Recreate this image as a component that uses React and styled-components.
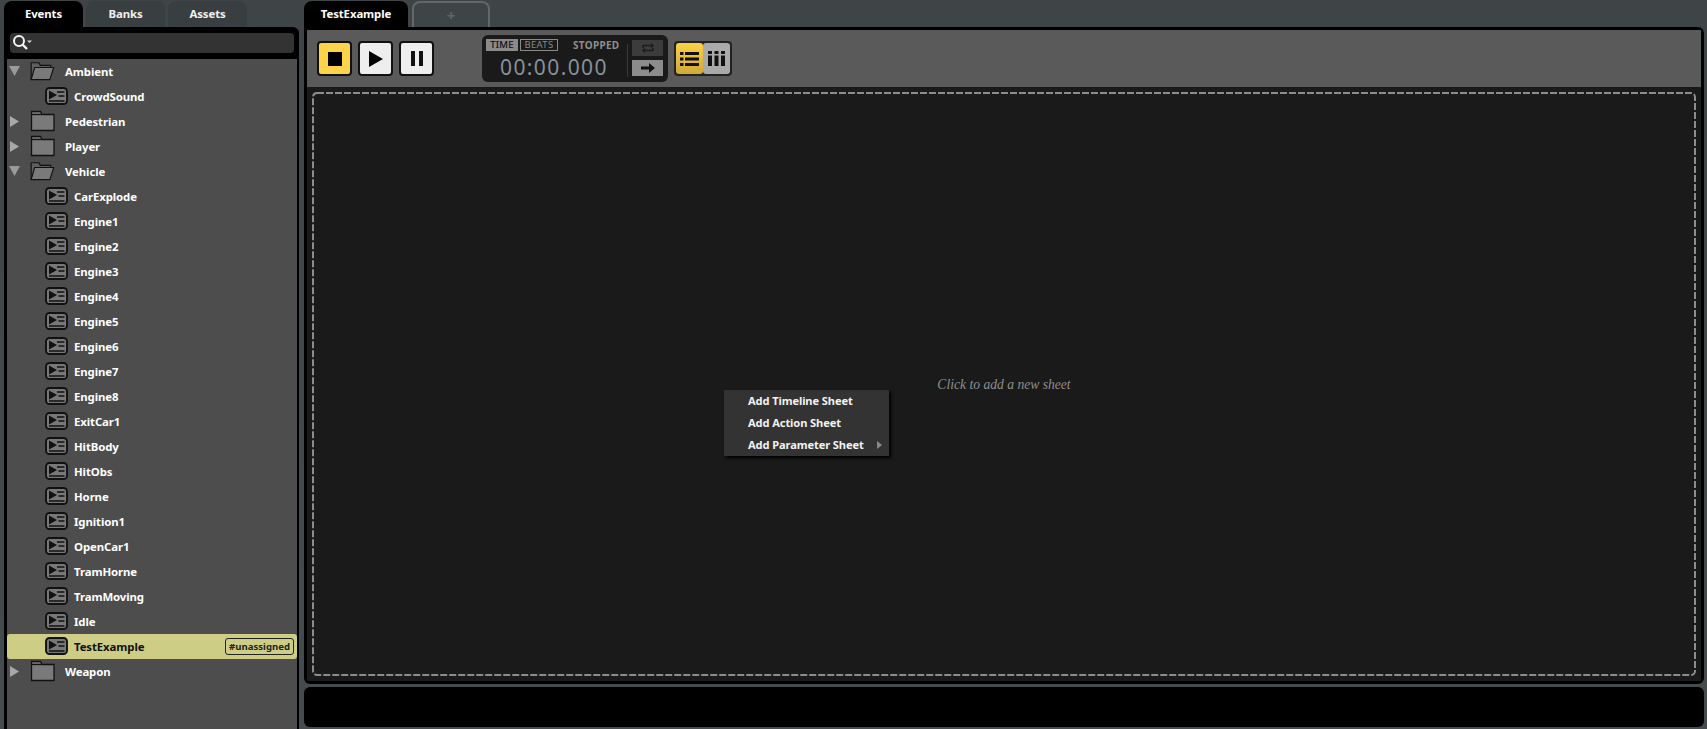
import React from "react";
import styled, { createGlobalStyle } from "styled-components";

const Global = createGlobalStyle`
  html, body { margin: 0; padding: 0; height: 100%; background: #42484a; overflow: hidden; }
  #root { height: 100%; }
  * { box-sizing: border-box; }
`;

const Page = styled.div`
  width: 1707px; height: 729px; display: flex; gap: 5px; padding: 1px 3px 0 4px;
  background: linear-gradient(#3f4547, #464c4e);
  font-family: "Noto Sans", "Open Sans", sans-serif; font-weight: 700; font-size: 11.4px; letter-spacing: -.1px; color: #fff;
`;
const LeftCol = styled.div`width: 295px; display: flex; flex-direction: column;`;
const RightCol = styled.div`flex: 1; display: flex; flex-direction: column; min-width: 0;`;
const TabRow = styled.div`height: 26px; display: flex; gap: ${p => p.$gap || 3}px; flex: none;`;
const Tab = styled.div`
  width: ${p => p.$w}px; height: 26px; display: flex; align-items: center; justify-content: center;
  border-radius: 8px 8px 0 0; padding-bottom: 2px;
  background: ${p => (p.$active ? "#000" : "#393f41")}; color: ${p => (p.$active ? "#fff" : "#f0f0f0")};
`;
const AddTab = styled.div`
  width: 78px; height: 26px; display: flex; align-items: center; justify-content: center;
  border: 2px solid #626768; border-bottom: 0; border-radius: 8px 8px 0 0; color: #5f6566; font-size: 15px;
`;
const Panel = styled.div`
  flex: 1; background: #000; border-radius: 0 6px 0 0; padding: 6px 2px 0 3px; display: flex; flex-direction: column;
`;
const SearchBar = styled.div`
  height: 20px; margin: 0 3px; background: #333; border-radius: 4px; display: flex; align-items: center; padding-left: 3px; flex: none;
`;
const Tree = styled.div`margin-top: 6px; flex: 1; background: #4d4d4d;`;
const Row = styled.div`
  height: 25px; display: flex; align-items: center; position: relative; padding-bottom: 1px;
  padding-left: ${p => (p.$folder ? 0 : 38)}px;
  background: ${p => (p.$selected ? "#cdcd85" : "transparent")};
  border-radius: ${p => (p.$selected ? "3px" : 0)};
  color: ${p => (p.$selected ? "#111" : "#fff")};
`;
const Arrow = styled.span`width: 14px; height: 25px; flex: none; display: flex; align-items: center; justify-content: center;`;
const FolderSlot = styled.span`
  width: 26px; height: 25px; display: flex; align-items: center; margin-left: 8px; margin-right: 10px;
`;
const EventSlot = styled.span`width: 23px; height: 18px; display: flex; margin-right: 6px;`;
const Tag = styled.span`
  position: absolute; right: 3px; top: 4px; height: 17px; padding: 0 3px; display: flex; align-items: center;
  border: 1px solid #222; border-radius: 3px; font-size: 9.6px; letter-spacing: 0; color: #222;
`;
const Main = styled.div`
  height: 657px; flex: none; background: #000; border-radius: 0 6px 6px 6px; padding: 3px; display: flex; flex-direction: column;
`;
const Toolbar = styled.div`
  height: 57px; flex: none; background: #5a5a5a; display: flex; align-items: flex-start; padding: 11px 0 0 10px;
`;
const CtlButton = styled.div`
  width: 35px; height: 35px; margin-right: 6px; border: 2px solid #111; border-radius: 4px; display: flex; align-items: center; justify-content: center;
  background: ${p => (p.$on ? "#fdd34a" : "#eee")};
`;
const Transport = styled.div`
  margin: -6px 0 0 42px; width: 186px; height: 47px; background: #1a1a1a; border-radius: 6px; display: flex; padding: 4px;
`;
const Readout = styled.div`width: 141px; display: flex; flex-direction: column;`;
const ModeRow = styled.div`display: flex; align-items: center; height: 12px;`;
const ModeOn = styled.span`
  width: 32px; height: 12px; background: #8a8a8a; color: #111; font-size: 9.5px; line-height: 12px; text-align: center; font-weight: 400; letter-spacing: .3px; -webkit-text-stroke: .2px #111;
`;
const ModeOff = styled.span`
  width: 38px; height: 12px; margin-left: 2px; border: 1px solid #8a8a8a; color: #8a8a8a; font-size: 9.5px; line-height: 10px; text-align: center; font-weight: 400; letter-spacing: .3px;
`;
const Stopped = styled.span`margin-left: 15px; color: #8f8f8f; font-size: 10px; letter-spacing: .3px;`;
const Clock = styled.div`
  margin: 4px 0 0 14px; font-weight: 400; font-size: 21px; line-height: 24px; letter-spacing: 1.4px; color: #87919a; white-space: nowrap;
`;
const Divider = styled.div`width: 1px; height: 33px; margin: 5px 4px 0 0; background: #3a3a3a;`;
const RepeatCol = styled.div`display: flex; flex-direction: column; gap: 4px; width: 31px; margin-top: 1px;`;
const RepeatBtn = styled.div`
  height: 16px; display: flex; align-items: center; justify-content: center; background: ${p => (p.$on ? "#8c8c8c" : "#3c3c3c")};
`;
const ViewGroup = styled.div`
  margin-left: 6px; width: 58px; height: 35px; padding: 2px; border-radius: 4px; background: #222; display: flex;
`;
const ViewBtn = styled.div`
  flex: 1; display: flex; align-items: center; justify-content: center; border-radius: 3px;
  background: ${p => (p.$on ? "linear-gradient(#fbd244, #d0a83a)" : "#aaa")};
`;
const Canvas = styled.div`flex: 1; background: #1a1a1a; padding: 5px; display: flex; position: relative;`;
const Dropzone = styled.div`
  flex: 1; position: relative; display: flex; align-items: center; justify-content: center;
`;
const DashFrame = styled.svg`position: absolute; inset: 0; width: 100%; height: 100%; pointer-events: none;`;
const DashRect = styled.rect`
  x: 1px; y: 1px; width: calc(100% - 2px); height: calc(100% - 2px); rx: 4px;
  fill: none; stroke: #8c8c8c; stroke-width: 2px; stroke-dasharray: 7 2;
`;
const Hint = styled.span`
  padding-top: 1px; font-family: "Liberation Serif", serif; font-style: italic; font-weight: 400; font-size: 13.6px; letter-spacing: 0; color: #8f8f8f;
`;
const Menu = styled.div`
  position: absolute; left: 417px; top: 303px; width: 165px; height: 66px; background: #333; box-shadow: 2px 2px 3px #000; display: flex; flex-direction: column;
  font-size: 11.1px;
`;
const MenuItem = styled.div`
  height: 22px; display: flex; align-items: center; padding: 0 7px 1px 24px; justify-content: space-between; color: #f2f2f2;
`;
const Bottom = styled.div`height: 40px; flex: none; margin-top: 3px; background: #000; border-radius: 6px;`;

const TriDown = () => <svg width="11" height="10" viewBox="0 0 11 10"><path d="M0 0h11L5.500 10z" fill="#9a9a9a" /></svg>;
const TriRight = () => <svg width="9" height="11" viewBox="0 0 9 11"><path d="M0 0v11l9-5.500z" fill="#a8a8a8" /></svg>;
const FolderClosed = () => (
  <svg width="26" height="22" viewBox="0 0 26 22">
    <path d="M2.500 4.500V1.500h9l1.500 3h12v16h-22.500z" fill="#7a7a7a" stroke="#111" strokeWidth="1.300" />
    <path d="M2.500 4.500h10" stroke="#111" strokeWidth="1.300" />
  </svg>
);
const FolderOpen = () => (
  <svg width="30" height="22" viewBox="0 0 30 22">
    <path d="M2.500 21V1.500h9l1.500 3h12v3" fill="#5e5e5e" stroke="#111" strokeWidth="1.300" />
    <path d="M2.500 21l4-14h22l-4.500 14z" fill="#7a7a7a" stroke="#111" strokeWidth="1.300" />
  </svg>
);
const EventIcon = () => (
  <svg width="23" height="18" viewBox="0 0 23 18">
    <rect x="1" y="1" width="21" height="16" rx="3.500" fill="#787878" stroke="#111" strokeWidth="1.900" />
    <path d="M4 3.500v9l8-4.500z" fill="#111" />
    <path d="M12 5h7.500M13.500 9h6M4 14h15.500" stroke="#111" strokeWidth="1.300" />
  </svg>
);
const SearchIcon = () => (
  <svg width="22" height="18" viewBox="0 0 22 18">
    <circle cx="6" cy="7" r="5" fill="none" stroke="#f4f4f4" strokeWidth="2" />
    <path d="M9.500 10.500l4.500 4.500" stroke="#f4f4f4" strokeWidth="2.400" />
    <path d="M14 6.500h5l-2.500 2.500z" fill="#d8d8d8" />
  </svg>
);
const StopIcon = () => <svg width="14" height="14"><rect width="14" height="14" fill="#000" /></svg>;
const PlayIcon = () => <svg width="14" height="16"><path d="M0 0l14 8-14 8z" fill="#000" /></svg>;
const PauseIcon = () => <svg width="12" height="15"><path d="M0 0h4v15H0zM8 0h4v15H8z" fill="#111" /></svg>;
const RepeatIcon = () => (
  <svg width="14" height="12" viewBox="0 0 14 12">
    <path d="M2 6V3.500h8.500M12 6v2.500H3.500" fill="none" stroke="#1c1c1c" strokeWidth="1.600" />
    <path d="M10 .8l3 2.700-3 2.700zM4 5.800L1 8.500l3 2.700z" fill="#1c1c1c" />
  </svg>
);
const ArrowIcon = () => <svg width="14" height="10" viewBox="0 0 14 10"><path d="M0 3.500h8V0l6 5-6 5V6.500H0z" fill="#111" /></svg>;
const ListIcon = () => (
  <svg width="19" height="14" viewBox="0 0 19 14">
    <path d="M0 0h3.500v3H0zM5 0h14v3H5zM0 5.500h3.500v3H0zM5 5.500h14v3H5zM0 11h3.500v3H0zM5 11h14v3H5z" fill="#111" />
  </svg>
);
const ColsIcon = () => (
  <svg width="17" height="15" viewBox="0 0 17 15">
    <path d="M0 0h4v3H0zM6.500 0h4v3h-4zM13 0h4v3h-4zM0 4.500h4V15H0zM6.500 4.500h4V15h-4zM13 4.500h4V15h-4z" fill="#111" />
  </svg>
);
const SubArrow = () => <svg width="5" height="8"><path d="M0 0l5 4-5 4z" fill="#8a8a8a" /></svg>;

const tree = [
  { f: "Ambient", open: true }, { e: "CrowdSound" }, { f: "Pedestrian" }, { f: "Player" }, { f: "Vehicle", open: true },
  ...["CarExplode", "Engine1", "Engine2", "Engine3", "Engine4", "Engine5", "Engine6", "Engine7", "Engine8", "ExitCar1", "HitBody", "HitObs", "Horne", "Ignition1", "OpenCar1", "TramHorne", "TramMoving", "Idle"].map(e => ({ e })),
  { e: "TestExample", selected: true }, { f: "Weapon" },
];

export default function App() {
  return (
    <Page>
      <Global />
      <LeftCol>
        <TabRow>
          <Tab $w={79} $active>Events</Tab>
          <Tab $w={79}>Banks</Tab>
          <Tab $w={79}>Assets</Tab>
        </TabRow>
        <Panel>
          <SearchBar><SearchIcon /></SearchBar>
          <Tree>
            {tree.map(item =>
              item.f ? (
                <Row $folder key={item.f}>
                  <Arrow>{item.open ? <TriDown /> : <TriRight />}</Arrow>
                  <FolderSlot>{item.open ? <FolderOpen /> : <FolderClosed />}</FolderSlot>
                  {item.f}
                </Row>
              ) : (
                <Row key={item.e} $selected={item.selected}>
                  <EventSlot><EventIcon /></EventSlot>
                  {item.e}
                  {item.selected && <Tag>#unassigned</Tag>}
                </Row>
              )
            )}
          </Tree>
        </Panel>
      </LeftCol>
      <RightCol>
        <TabRow $gap={4}>
          <Tab $w={104} $active>TestExample</Tab>
          <AddTab>+</AddTab>
        </TabRow>
        <Main>
          <Toolbar>
            <CtlButton $on><StopIcon /></CtlButton>
            <CtlButton><PlayIcon /></CtlButton>
            <CtlButton><PauseIcon /></CtlButton>
            <Transport>
              <Readout>
                <ModeRow>
                  <ModeOn>TIME</ModeOn>
                  <ModeOff>BEATS</ModeOff>
                  <Stopped>STOPPED</Stopped>
                </ModeRow>
                <Clock>00:00.000</Clock>
              </Readout>
              <Divider />
              <RepeatCol>
                <RepeatBtn><RepeatIcon /></RepeatBtn>
                <RepeatBtn $on><ArrowIcon /></RepeatBtn>
              </RepeatCol>
            </Transport>
            <ViewGroup>
              <ViewBtn $on><ListIcon /></ViewBtn>
              <ViewBtn><ColsIcon /></ViewBtn>
            </ViewGroup>
          </Toolbar>
          <Canvas>
            <Dropzone>
              <DashFrame><DashRect /></DashFrame>
              <Hint>Click to add a new sheet</Hint>
            </Dropzone>
            <Menu>
              <MenuItem>Add Timeline Sheet</MenuItem>
              <MenuItem>Add Action Sheet</MenuItem>
              <MenuItem>Add Parameter Sheet<SubArrow /></MenuItem>
            </Menu>
          </Canvas>
        </Main>
        <Bottom />
      </RightCol>
    </Page>
  );
}
